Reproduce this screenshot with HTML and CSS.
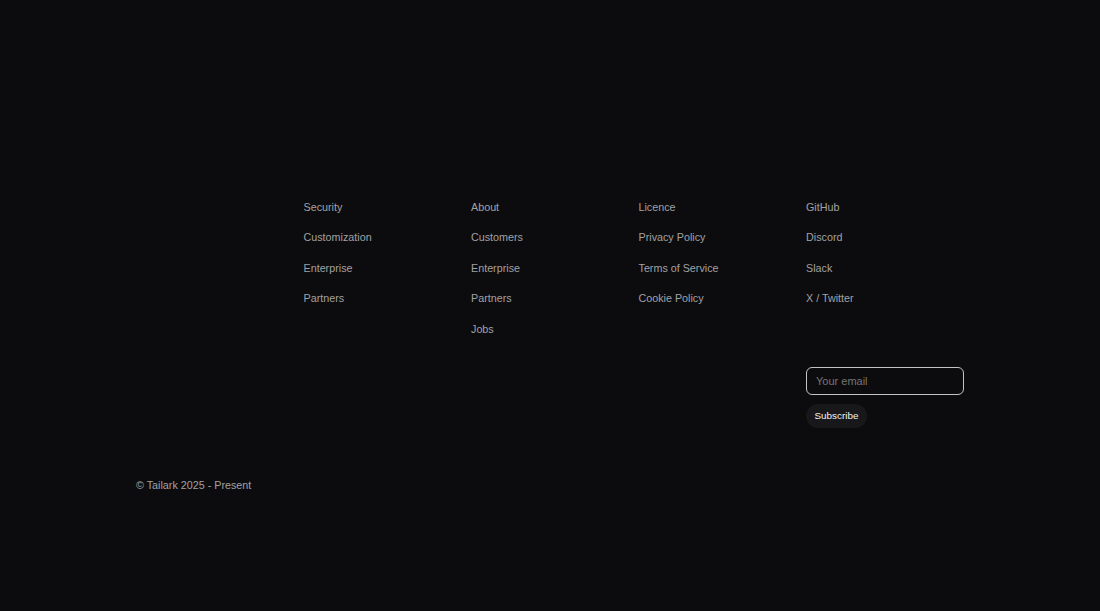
FILE: index.html
```html
<!DOCTYPE html>
<html lang="en">
<head>
<meta charset="utf-8">
<title>Footer</title>
<link rel="stylesheet" href="styles.css">
</head>
<body>
<footer class="footer">
  <div class="container">
    <div class="grid">
      <div class="brand"></div>
      <ul class="links">
        <li><a href="#">Security</a></li>
        <li><a href="#">Customization</a></li>
        <li><a href="#">Enterprise</a></li>
        <li><a href="#">Partners</a></li>
      </ul>
      <ul class="links">
        <li><a href="#">About</a></li>
        <li><a href="#">Customers</a></li>
        <li><a href="#">Enterprise</a></li>
        <li><a href="#">Partners</a></li>
        <li><a href="#">Jobs</a></li>
      </ul>
      <ul class="links">
        <li><a href="#">Licence</a></li>
        <li><a href="#">Privacy Policy</a></li>
        <li><a href="#">Terms of Service</a></li>
        <li><a href="#">Cookie Policy</a></li>
      </ul>
      <ul class="links">
        <li><a href="#">GitHub</a></li>
        <li><a href="#">Discord</a></li>
        <li><a href="#">Slack</a></li>
        <li><a href="#">X / Twitter</a></li>
      </ul>
      <form class="subscribe" onsubmit="return false">
        <input class="email" type="email" placeholder="Your email">
        <button class="btn" type="submit">Subscribe</button>
      </form>
    </div>
    <p class="copy">© Tailark 2025 - Present</p>
  </div>
</footer>
</body>
</html>
```

FILE: styles.css
```css
* { box-sizing: border-box; }

html, body {
  margin: 0;
  padding: 0;
  background: #0c0c0e;
  height: 100%;
}

body {
  font-family: "Liberation Sans", Arial, sans-serif;
  color: #a1a1a3;
}

.footer {
  padding-top: 199.5px;
}

.container {
  width: 828px;
  margin: 0 auto;
}

.grid {
  display: grid;
  grid-template-columns: repeat(5, 158px);
  column-gap: 9.5px;
  row-gap: 30.5px;
}

.links {
  list-style: none;
  margin: 0;
  padding: 0;
  display: flex;
  flex-direction: column;
  gap: 15.5px;
}

.links li {
  font-size: 10.75px;
  line-height: 15px;
}

.links a {
  color: #a1a1a3;
  text-decoration: none;
}

.subscribe {
  grid-column: 5;
  display: flex;
  flex-direction: column;
  align-items: flex-start;
  gap: 9px;
  margin: 0;
}

.email {
  width: 158px;
  height: 27.5px;
  border: 1px solid #c4c4c6;
  border-radius: 6px;
  background: transparent;
  padding: 0 9px;
  font-family: "Liberation Sans", Arial, sans-serif;
  font-size: 11px;
  color: #e4e4e7;
  outline: none;
}

.email::placeholder {
  color: #747476;
}

.btn {
  height: 24.5px;
  padding: 0 8.5px;
  border: none;
  border-radius: 12px;
  background: #18181a;
  color: #f4f4f5;
  font-family: "Liberation Sans", Arial, sans-serif;
  font-size: 9.9px;
  cursor: pointer;
}

.copy {
  margin: 50px 0 0;
  font-size: 10.75px;
  line-height: 15px;
  color: #a1a1a3;
}
```
